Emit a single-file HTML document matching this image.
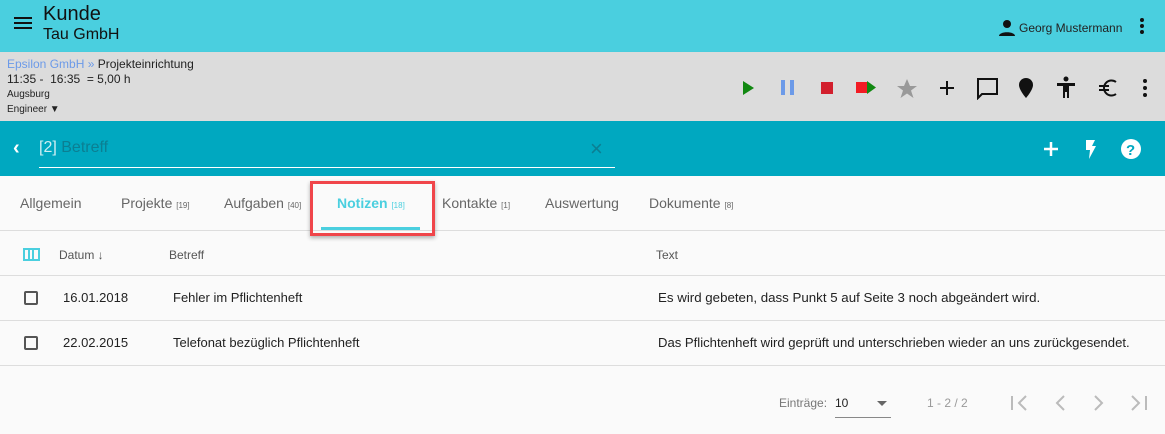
<!DOCTYPE html><html><head><style>
*{margin:0;padding:0;box-sizing:border-box}
body{width:1165px;height:434px;overflow:hidden;background:#fafafa;font-family:"Liberation Sans",sans-serif;position:relative}
.a{position:absolute;white-space:nowrap}
</style></head><body>
<div class="a" style="left:0;top:0;width:1165px;height:52px;background:#4acfdf"></div>
<div class="a" style="left:14px;top:17px;width:18px;height:2px;background:#111;box-shadow:0 5px 0 #111,0 10px 0 #111"></div>
<div class="a" style="left:43px;top:3px;font-size:20px;color:#111">Kunde</div>
<div class="a" style="left:43px;top:26px;font-size:16px;color:#111">Tau GmbH</div>
<svg class="a" style="left:997px;top:19px" width="20" height="18" viewBox="0 0 20 18"><circle cx="10" cy="5" r="4" fill="#111"/><path d="M2 17c0-5 16-5 16 0z" fill="#111"/></svg>
<div class="a" style="left:1019px;top:21px;font-size:12px;color:#222">Georg Mustermann</div>
<div class="a" style="left:1140px;top:18px;width:4px;height:4px;border-radius:2px;background:#111;box-shadow:0 6px 0 #111,0 12px 0 #111"></div>
<div class="a" style="left:0;top:52px;width:1165px;height:69px;background:#dcdcdc;box-shadow:0 2px 3px rgba(0,0,0,.2)"></div>
<div class="a" style="left:7px;top:57px;font-size:12px;color:#222"><span style="color:#6c9ae8">Epsilon GmbH »</span> Projekteinrichtung</div>
<div class="a" style="left:7px;top:72px;font-size:12px;color:#222">11:35 -&nbsp; 16:35 &nbsp;= 5,00 h</div>
<div class="a" style="left:7px;top:89px;font-size:10px;color:#222">Augsburg</div>
<div class="a" style="left:7px;top:104px;font-size:10px;color:#222">Engineer ▼</div>
<svg class="a" style="left:740px;top:76px" width="420" height="24" viewBox="0 0 420 24">
<path d="M3 5v14l11-7z" fill="#118811"/>
<rect x="41" y="4" width="4" height="15" fill="#6c9ae8"/><rect x="50" y="4" width="4" height="15" fill="#6c9ae8"/>
<rect x="81" y="6" width="12" height="12" fill="#d21f2d"/>
<rect x="116" y="6" width="11" height="11" fill="#f21c24"/><path d="M127 5v13l9-6.5z" fill="#118811"/>
<path d="M167 3l3 7h7l-6 4.5 2.5 7.5-6.5-4.5-6.5 4.5 2.5-7.5-6-4.5h7z" fill="#999"/>
<path d="M200 12h14M207 5v14" stroke="#111" stroke-width="2"/>
<path d="M238 3h19v15h-15l-4 4z" fill="none" stroke="#111" stroke-width="2"/>
<path d="M286 2a7 7 0 0 0-7 7c0 5 7 13 7 13s7-8 7-13a7 7 0 0 0-7-7z" fill="#111"/>
<circle cx="326" cy="3" r="2.5" fill="#111"/><path d="M317 7h18v3h-6v12h-2v-6h-2v6h-2v-12h-6z" fill="#111"/>
<path d="M376 6A7.5 7.5 0 1 0 376 18M359 10h10M359 14h10" fill="none" stroke="#111" stroke-width="2"/>
<circle cx="405" cy="5" r="2" fill="#111"/><circle cx="405" cy="12" r="2" fill="#111"/><circle cx="405" cy="19" r="2" fill="#111"/>
</svg>
<div class="a" style="left:0;top:121px;width:1165px;height:55px;background:#00a8c0"></div>
<div class="a" style="left:13px;top:137px;font-size:20px;color:#fff;font-weight:bold">‹</div>
<div class="a" style="left:39px;top:139px;font-size:16px;color:#0b7f92"><span style="color:#cfeef2">[2]</span> Betreff</div>
<div class="a" style="left:39px;top:167px;width:576px;height:1px;background:#fff"></div>
<div class="a" style="left:590px;top:136px;font-size:22px;color:#0b7f92">×</div>
<svg class="a" style="left:1040px;top:136px" width="105" height="26" viewBox="0 0 105 26"><path d="M4 13h14M11 6v14" stroke="#fff" stroke-width="2.5"/><path d="M46 4h9l-3 6h4l-7 13 1-9h-4z" fill="#fff"/><circle cx="91" cy="13" r="10" fill="#fff"/><text x="86" y="19" font-size="15" font-weight="bold" fill="#00a8c0" font-family="Liberation Sans">?</text></svg>
<div class="a" style="left:0;top:230px;width:1165px;height:1px;background:#ddd"></div>
<div class="a" style="top:195px;font-size:14px;color:#666;left:20px">Allgemein</div>
<div class="a" style="top:195px;font-size:14px;color:#666;left:121px">Projekte <small style="font-size:8px">[19]</small></div>
<div class="a" style="top:195px;font-size:14px;color:#666;left:224px">Aufgaben <small style="font-size:8px">[40]</small></div>
<div class="a" style="top:195px;font-size:14px;color:#4acfdf;left:337px;font-weight:bold">Notizen <small style="font-size:8px;font-weight:normal">[18]</small></div>
<div class="a" style="top:195px;font-size:14px;color:#666;left:442px">Kontakte <small style="font-size:8px">[1]</small></div>
<div class="a" style="top:195px;font-size:14px;color:#666;left:545px">Auswertung</div>
<div class="a" style="top:195px;font-size:14px;color:#666;left:649px">Dokumente <small style="font-size:8px">[8]</small></div>
<div class="a" style="left:321px;top:227px;width:99px;height:3px;background:#4acfdf"></div>
<div class="a" style="left:310px;top:181px;width:125px;height:55px;border:3px solid #f0454a;box-shadow:0 2px 4px rgba(0,0,0,.3)"></div>
<div class="a" style="left:23px;top:248px;width:17px;height:13px;border:2px solid #4acfdf;background:linear-gradient(90deg,transparent 3px,#4acfdf 3px,#4acfdf 5px,transparent 5px,transparent 7px,#4acfdf 7px,#4acfdf 9px,transparent 9px)"></div>
<div class="a" style="left:59px;top:248px;font-size:12px;color:#555">Datum ↓</div>
<div class="a" style="left:169px;top:248px;font-size:12px;color:#555">Betreff</div>
<div class="a" style="left:656px;top:248px;font-size:12px;color:#555">Text</div>
<div class="a" style="left:0;top:275px;width:1165px;height:1px;background:#ddd"></div>
<div class="a" style="left:0;top:320px;width:1165px;height:1px;background:#ddd"></div>
<div class="a" style="left:0;top:365px;width:1165px;height:1px;background:#ddd"></div>
<div class="a" style="left:24px;top:291px;width:14px;height:14px;border:2px solid #555;border-radius:2px"></div>
<div class="a" style="left:24px;top:336px;width:14px;height:14px;border:2px solid #555;border-radius:2px"></div>
<div class="a" style="left:63px;top:290px;font-size:13px;color:#222">16.01.2018</div>
<div class="a" style="left:173px;top:290px;font-size:13px;color:#222">Fehler im Pflichtenheft</div>
<div class="a" style="left:658px;top:290px;font-size:13.3px;color:#222">Es wird gebeten, dass Punkt 5 auf Seite 3 noch abgeändert wird.</div>
<div class="a" style="left:63px;top:335px;font-size:13px;color:#222">22.02.2015</div>
<div class="a" style="left:173px;top:335px;font-size:13px;color:#222">Telefonat bezüglich Pflichtenheft</div>
<div class="a" style="left:658px;top:335px;font-size:13.1px;color:#222">Das Pflichtenheft wird geprüft und unterschrieben wieder an uns zurückgesendet.</div>
<div class="a" style="left:779px;top:396px;font-size:12px;color:#777">Einträge:</div>
<div class="a" style="left:835px;top:396px;font-size:12px;color:#222">10</div>
<div class="a" style="left:877px;top:401px;border:5px solid transparent;border-top:5px solid #666"></div>
<div class="a" style="left:835px;top:417px;width:56px;height:1px;background:#888"></div>
<div class="a" style="left:927px;top:396px;font-size:12px;color:#999">1 - 2 / 2</div>
<svg class="a" style="left:1008px;top:392px" width="145" height="22" viewBox="0 0 145 22" fill="none" stroke="#bbb" stroke-width="2"><path d="M4 4v14M18 4l-7 7 7 7"/><path d="M56 4l-7 7 7 7"/><path d="M87 4l7 7-7 7"/><path d="M124 4l7 7-7 7M138 4v14"/></svg>
</body></html>
